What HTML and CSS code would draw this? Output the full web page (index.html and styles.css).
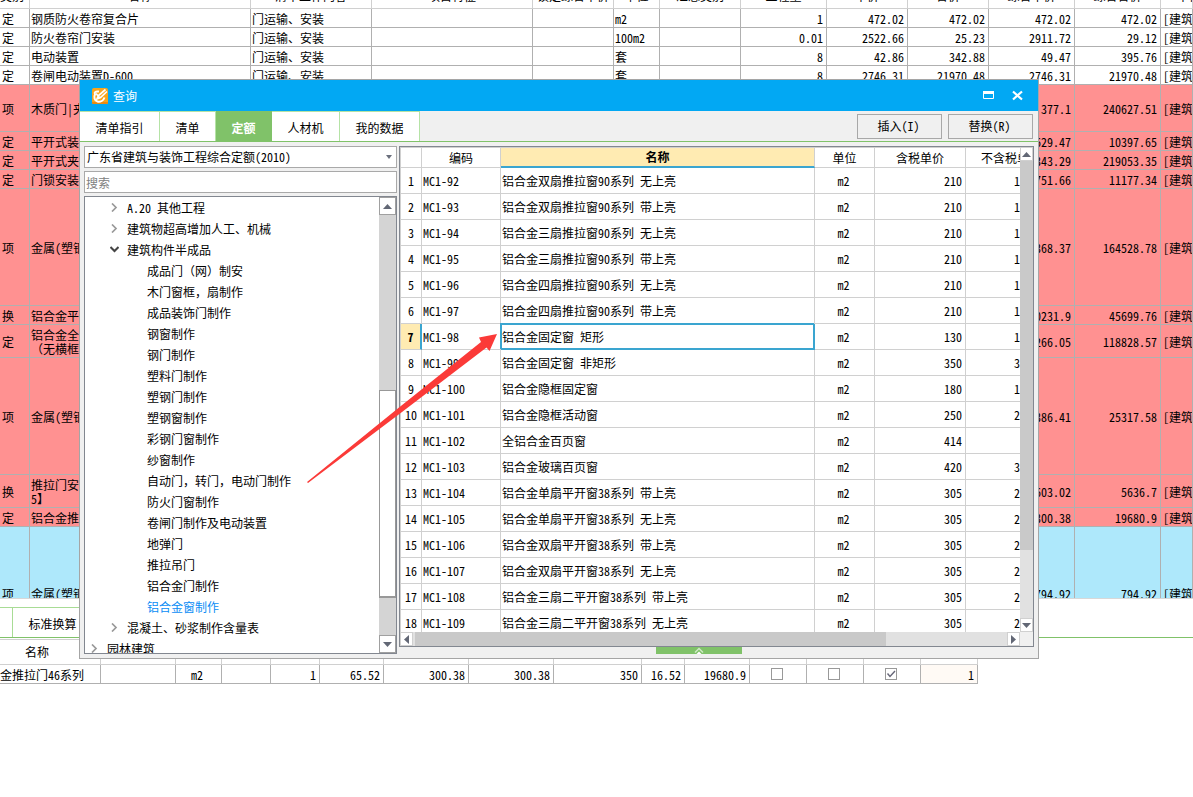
FILE: index.html
```html
<!DOCTYPE html>
<html lang="zh-CN">
<head>
<meta charset="utf-8">
<title>查询</title>
<link rel="stylesheet" href="styles.css">
</head>
<body>
<main class="app">
  <section class="budget">
    <table class="budget-table">
      <colgroup>
        <col class="w30"><col class="w221"><col class="w121"><col class="w161"><col class="w81"><col class="w46"><col class="w81"><col class="w86"><col class="w81"><col class="w81"><col class="w86"><col class="w86"><col>
      </colgroup>
      <thead>
        <tr class="r-head"><th class="kind">类别</th><th>名称</th><th>清单工作内容</th><th>项目特征</th><th>锁定综合单价</th><th>单位</th><th>汇总类别</th><th>工程量</th><th>单价</th><th>合价</th><th>综合单价</th><th>综合合价</th><th class="file">单价构成文件</th></tr>
      </thead>
      <tbody>
        <tr class="r19"><td>定</td><td>钢质防火卷帘复合片</td><td>门运输、安装</td><td></td><td></td><td>m2</td><td></td><td class="num">1</td><td class="num">472.02</td><td class="num">472.02</td><td class="num">472.02</td><td class="num">472.02</td><td>[建筑</td></tr>
        <tr class="r19"><td>定</td><td>防火卷帘门安装</td><td>门运输、安装</td><td></td><td></td><td>100m2</td><td></td><td class="num">0.01</td><td class="num">2522.66</td><td class="num">25.23</td><td class="num">2911.72</td><td class="num">29.12</td><td>[建筑</td></tr>
        <tr class="r19"><td>定</td><td>电动装置</td><td>门运输、安装</td><td></td><td></td><td>套</td><td></td><td class="num">8</td><td class="num">42.86</td><td class="num">342.88</td><td class="num">49.47</td><td class="num">395.76</td><td>[建筑</td></tr>
        <tr class="r19"><td>定</td><td>卷闸电动装置D-600</td><td>门运输、安装</td><td></td><td></td><td>套</td><td></td><td class="num">8</td><td class="num">2746.31</td><td class="num">21970.48</td><td class="num">2746.31</td><td class="num">21970.48</td><td>[建筑</td></tr>
        <tr class="r47 red"><td>项</td><td>木质门|夹</td><td></td><td></td><td></td><td></td><td></td><td></td><td></td><td></td><td class="num">377.1</td><td class="num">240627.51</td><td>[建筑</td></tr>
        <tr class="r19 red"><td>定</td><td>平开式装</td><td></td><td></td><td></td><td></td><td></td><td></td><td></td><td></td><td class="num">629.47</td><td class="num">10397.65</td><td>[建筑</td></tr>
        <tr class="r19 red"><td>定</td><td>平开式夹</td><td></td><td></td><td></td><td></td><td></td><td></td><td></td><td></td><td class="num">343.29</td><td class="num">219053.35</td><td>[建筑</td></tr>
        <tr class="r19 red"><td>定</td><td>门锁安装</td><td></td><td></td><td></td><td></td><td></td><td></td><td></td><td></td><td class="num">751.66</td><td class="num">11177.34</td><td>[建筑</td></tr>
        <tr class="r117 red"><td>项</td><td>金属(塑钢</td><td></td><td></td><td></td><td></td><td></td><td></td><td></td><td></td><td class="num">368.37</td><td class="num">164528.78</td><td>[建筑</td></tr>
        <tr class="r19 red"><td>换</td><td>铝合金平</td><td></td><td></td><td></td><td></td><td></td><td></td><td></td><td></td><td class="num">0231.9</td><td class="num">45699.76</td><td>[建筑</td></tr>
        <tr class="r33 red"><td>定</td><td>铝合金全<br>（无横框</td><td></td><td></td><td></td><td></td><td></td><td></td><td></td><td></td><td class="num">266.05</td><td class="num">118828.57</td><td>[建筑</td></tr>
        <tr class="r117 red"><td>项</td><td>金属(塑钢</td><td></td><td></td><td></td><td></td><td></td><td></td><td></td><td></td><td class="num">386.41</td><td class="num">25317.58</td><td>[建筑</td></tr>
        <tr class="r33 red"><td>换</td><td>推拉门安<br>5】</td><td></td><td></td><td></td><td></td><td></td><td></td><td></td><td></td><td class="num">603.02</td><td class="num">5636.7</td><td>[建筑</td></tr>
        <tr class="r19 red"><td>定</td><td>铝合金推</td><td></td><td></td><td></td><td></td><td></td><td></td><td></td><td></td><td class="num">300.38</td><td class="num">19680.9</td><td>[建筑</td></tr>
        <tr class="r132 blue"><td>项</td><td>金属(塑钢</td><td></td><td></td><td></td><td></td><td></td><td></td><td></td><td></td><td class="num">794.92</td><td class="num">794.92</td><td>[建筑</td></tr>
      </tbody>
    </table>
  </section>

  <section class="detail">
    <nav class="detail-tabs">
      <span class="stub"></span>
      <button type="button" class="detail-tab">标准换算</button>
    </nav>
    <table class="detail-table">
      <colgroup>
        <col class="w101"><col class="w75"><col class="w46"><col class="w49"><col class="w49"><col class="w64"><col class="w85"><col class="w85"><col class="w88"><col class="w43"><col class="w65"><col class="w57"><col class="w57"><col class="w57"><col class="w57">
      </colgroup>
      <thead>
        <tr class="r25"><th class="dname">名称</th><th></th><th></th><th></th><th></th><th></th><th></th><th></th><th></th><th></th><th></th><th></th><th></th><th></th><th></th></tr>
      </thead>
      <tbody>
        <tr class="r19"><td class="flush">金推拉门46系列</td><td></td><td class="mid">m2</td><td></td><td class="num">1</td><td class="num">65.52</td><td class="num">300.38</td><td class="num">300.38</td><td class="num">350</td><td class="num">16.52</td><td class="num">19680.9</td><td class="check"><input type="checkbox" aria-label="选项一"></td><td class="check"><input type="checkbox" aria-label="选项二"></td><td class="check"><input type="checkbox" aria-label="选项三" checked></td><td class="num cream">1</td></tr>
      </tbody>
    </table>
  </section>

  <section class="dialog" role="dialog" aria-labelledby="dialog-title">
    <header class="titlebar">
      <svg class="logo" width="16" height="16" viewBox="0 0 16 16" aria-hidden="true">
        <rect width="16" height="16" rx="2" fill="#f9a51d"/>
        <path d="M0 14h16v1q0 1-1 1H1q-1 0-1-1z" fill="#e98a12"/>
        <path d="M7 3.500C3.500 3 2 4.500 3 6.500C1.500 9 2.500 12.500 5.500 13.500C8.500 14.200 11.500 12.500 12.500 9.500" fill="none" stroke="#fff" stroke-width="2"/>
        <path d="M13.500 1.500L6.500 7.500L5 11L8.500 9.500L15 3.500M4 5.500L8 10" fill="none" stroke="#fff" stroke-width="1.700"/>
      </svg>
      <h1 id="dialog-title">查询</h1>
      <button type="button" class="win-btn" aria-label="最大化">
        <svg width="12" height="12" viewBox="0 0 12 12"><path d="M0.500 1.500h10v7h-10z" fill="none" stroke="#fff"/><path d="M0 1h11v3H0z" fill="#fff"/></svg>
      </button>
      <button type="button" class="win-btn" aria-label="关闭">
        <svg width="12" height="12" viewBox="0 0 12 12"><path d="M1 1.500l9 8M10 1.500l-9 8" fill="none" stroke="#fff" stroke-width="2.200"/></svg>
      </button>
    </header>

    <div class="toolbar">
      <nav class="tabs">
        <button type="button" class="tab t80">清单指引</button>
        <button type="button" class="tab t56">清单</button>
        <button type="button" class="tab t56 active">定额</button>
        <button type="button" class="tab t68">人材机</button>
        <button type="button" class="tab t80">我的数据</button>
      </nav>
      <div class="actions">
        <button type="button" class="action">插入(I)</button>
        <button type="button" class="action">替换(R)</button>
      </div>
    </div>

    <div class="panes">
      <div class="side">
        <div class="combo">
          <select aria-label="定额库"><option>广东省建筑与装饰工程综合定额(2010)</option></select>
          <svg class="caret" width="6" height="4" viewBox="0 0 6 4" aria-hidden="true"><path d="M0 0h6L3 4z" fill="#6a6f7c"/></svg>
        </div>
        <input class="search" type="text" placeholder="搜索" aria-label="搜索">
        <div class="tree-box">
          <ul class="tree">
            <li class="l1"><svg class="chev" viewBox="0 0 9 9"><path d="M2 0.500l4 4l-4 4"/></svg>A.20 其他工程</li>
            <li class="l1"><svg class="chev" viewBox="0 0 9 9"><path d="M2 0.500l4 4l-4 4"/></svg>建筑物超高增加人工、机械</li>
            <li class="l1"><svg class="chev open" viewBox="0 0 9 9"><path d="M0.500 2l4 4l4-4"/></svg>建筑构件半成品</li>
            <li class="l2">成品门（网）制安</li>
            <li class="l2">木门窗框，扇制作</li>
            <li class="l2">成品装饰门制作</li>
            <li class="l2">钢窗制作</li>
            <li class="l2">钢门制作</li>
            <li class="l2">塑料门制作</li>
            <li class="l2">塑钢门制作</li>
            <li class="l2">塑钢窗制作</li>
            <li class="l2">彩钢门窗制作</li>
            <li class="l2">纱窗制作</li>
            <li class="l2">自动门，转门，电动门制作</li>
            <li class="l2">防火门窗制作</li>
            <li class="l2">卷闸门制作及电动装置</li>
            <li class="l2">地弹门</li>
            <li class="l2">推拉吊门</li>
            <li class="l2">铝合金门制作</li>
            <li class="l2 current">铝合金窗制作</li>
            <li class="l1"><svg class="chev" viewBox="0 0 9 9"><path d="M2 0.500l4 4l-4 4"/></svg>混凝土、砂浆制作含量表</li>
            <li class="l0"><svg class="chev" viewBox="0 0 9 9"><path d="M2 0.500l4 4l-4 4"/></svg>园林建筑</li>
          </ul>
          <div class="tree-bar">
            <button type="button" class="tb-btn" aria-label="向上"><svg width="9" height="5" viewBox="0 0 9 5"><path d="M0 5h9L4.500 0z"/></svg></button>
            <span class="tree-gap"></span>
            <span class="tree-thumb"></span>
            <span class="tree-rest"></span>
            <button type="button" class="tb-btn" aria-label="向下"><svg width="9" height="5" viewBox="0 0 9 5"><path d="M0 0h9L4.500 5z"/></svg></button>
          </div>
        </div>
      </div>

      <div class="grid-side">
        <div class="grid-box">
          <div class="grid-view">
            <table class="grid">
              <colgroup><col class="w21"><col class="w79"><col><col class="w60"><col class="w91"><col class="w91"></colgroup>
              <thead>
                <tr class="r21"><th></th><th>编码</th><th class="picked">名称</th><th>单位</th><th>含税单价</th><th>不含税单价</th></tr>
              </thead>
              <tbody>
                <tr><th>1</th><td>MC1-92</td><td>铝合金双扇推拉窗90系列 无上亮</td><td class="mid">m2</td><td class="num">210</td><td class="tail">179.49</td></tr>
                <tr><th>2</th><td>MC1-93</td><td>铝合金双扇推拉窗90系列 带上亮</td><td class="mid">m2</td><td class="num">210</td><td class="tail">179.49</td></tr>
                <tr><th>3</th><td>MC1-94</td><td>铝合金三扇推拉窗90系列 无上亮</td><td class="mid">m2</td><td class="num">210</td><td class="tail">179.49</td></tr>
                <tr><th>4</th><td>MC1-95</td><td>铝合金三扇推拉窗90系列 带上亮</td><td class="mid">m2</td><td class="num">210</td><td class="tail">179.49</td></tr>
                <tr><th>5</th><td>MC1-96</td><td>铝合金四扇推拉窗90系列 无上亮</td><td class="mid">m2</td><td class="num">210</td><td class="tail">179.49</td></tr>
                <tr><th>6</th><td>MC1-97</td><td>铝合金四扇推拉窗90系列 带上亮</td><td class="mid">m2</td><td class="num">210</td><td class="tail">179.49</td></tr>
                <tr class="sel"><th>7</th><td>MC1-98</td><td class="cell-on">铝合金固定窗 矩形</td><td class="mid">m2</td><td class="num">130</td><td class="tail">111.11</td></tr>
                <tr><th>8</th><td>MC1-99</td><td>铝合金固定窗 非矩形</td><td class="mid">m2</td><td class="num">350</td><td class="tail">300</td></tr>
                <tr><th>9</th><td>MC1-100</td><td>铝合金隐框固定窗</td><td class="mid">m2</td><td class="num">180</td><td class="tail">153.85</td></tr>
                <tr><th>10</th><td>MC1-101</td><td>铝合金隐框活动窗</td><td class="mid">m2</td><td class="num">250</td><td class="tail">213.68</td></tr>
                <tr><th>11</th><td>MC1-102</td><td>全铝合金百页窗</td><td class="mid">m2</td><td class="num">414</td><td class="tail"></td></tr>
                <tr><th>12</th><td>MC1-103</td><td>铝合金玻璃百页窗</td><td class="mid">m2</td><td class="num">420</td><td class="tail">358.97</td></tr>
                <tr><th>13</th><td>MC1-104</td><td>铝合金单扇平开窗38系列 带上亮</td><td class="mid">m2</td><td class="num">305</td><td class="tail">260.68</td></tr>
                <tr><th>14</th><td>MC1-105</td><td>铝合金单扇平开窗38系列 无上亮</td><td class="mid">m2</td><td class="num">305</td><td class="tail">260.68</td></tr>
                <tr><th>15</th><td>MC1-106</td><td>铝合金双扇平开窗38系列 带上亮</td><td class="mid">m2</td><td class="num">305</td><td class="tail">260.68</td></tr>
                <tr><th>16</th><td>MC1-107</td><td>铝合金双扇平开窗38系列 无上亮</td><td class="mid">m2</td><td class="num">305</td><td class="tail">260.68</td></tr>
                <tr><th>17</th><td>MC1-108</td><td>铝合金三扇二平开窗38系列 带上亮</td><td class="mid">m2</td><td class="num">305</td><td class="tail">260.68</td></tr>
                <tr><th>18</th><td>MC1-109</td><td>铝合金三扇二平开窗38系列 无上亮</td><td class="mid">m2</td><td class="num">305</td><td class="tail">260.68</td></tr>
              </tbody>
            </table>
          </div>
          <div class="vbar">
            <button type="button" class="sb-btn" aria-label="向上"><svg width="9" height="5" viewBox="0 0 9 5"><path d="M0 5h9L4.500 0z"/></svg></button>
            <span class="vthumb"></span>
            <button type="button" class="sb-btn" aria-label="向下"><svg width="9" height="5" viewBox="0 0 9 5"><path d="M0 0h9L4.500 5z"/></svg></button>
          </div>
          <div class="hbar">
            <button type="button" class="sb-btn" aria-label="向左"><svg width="5" height="9" viewBox="0 0 5 9"><path d="M5 0v9L0 4.500z"/></svg></button>
            <span class="hthumb"></span>
            <button type="button" class="sb-btn" aria-label="向右"><svg width="5" height="9" viewBox="0 0 5 9"><path d="M0 0v9L5 4.500z"/></svg></button>
          </div>
          <span class="corner"></span>
        </div>
        <button type="button" class="handle" aria-label="展开"><svg width="10" height="7" viewBox="0 0 10 7"><path d="M1 5.500l4-4l4 4" fill="none" stroke="#cfeac6" stroke-width="1.500"/><path d="M2.500 7L5 4.500L7.500 7z" fill="#fff"/></svg></button>
      </div>
    </div>
  </section>

  <svg class="pointer" width="192" height="150" viewBox="0 0 192 150" aria-hidden="true"><path d="M0 148L92 73.500L174 8L172 3.500L190 0L182.500 17L179.500 13.500L95 78L1 149z" fill="#fb3a38"/></svg>
</main>
</body>
</html>
```
FILE: styles.css
```css
* { box-sizing: border-box; }

body {
  margin: 0;
  background: #fff;
  color: #000;
  font: 12px/14px "Noto Sans Mono CJK SC", "Noto Sans CJK SC", "Liberation Mono", monospace;
}

button, input, select { font: inherit; color: inherit; margin: 0; border-radius: 0; }
button { padding: 0; border: 0; background: none; }

.app { position: relative; min-height: 100vh; overflow: hidden; }

table { border-collapse: separate; border-spacing: 0; table-layout: fixed; }
th, td {
  padding: 2px 3px 0 1px;
  border: solid #b0b0b0;
  border-width: 0 1px 1px 0;
  overflow: hidden;
  white-space: nowrap;
  text-align: left;
  vertical-align: middle;
  font-weight: 400;
}
thead th { padding: 0; text-align: center; border-color: #d0d0d0; }
.num { text-align: right; }
.mid { text-align: center; padding-left: 0; }

.w21 { width: 21px; }
.w30 { width: 30px; }
.w43 { width: 43px; }
.w46 { width: 46px; }
.w49 { width: 49px; }
.w57 { width: 57px; }
.w60 { width: 60px; }
.w64 { width: 64px; }
.w65 { width: 65px; }
.w75 { width: 75px; }
.w79 { width: 79px; }
.w81 { width: 81px; }
.w85 { width: 85px; }
.w86 { width: 86px; }
.w88 { width: 88px; }
.w91 { width: 91px; }
.w101 { width: 101px; }
.w121 { width: 121px; }
.w161 { width: 161px; }
.w221 { width: 221px; }

.r-head { height: 25px; }
.r19 { height: 19px; }
.r21 { height: 21px; }
.r25 { height: 25px; }
.r33 { height: 33px; }
.r47 { height: 47px; }
.r117 { height: 117px; }
.r132 { height: 132px; }
.r33 td { line-height: 14px; }

/* budget sheet */
.budget { height: 599px; overflow: hidden; border-bottom: 1px solid #d8d8d8; }
.budget-table { width: 100%; margin-top: -16px; }
.budget-table td:first-child { padding-left: 2px; }
.budget-table td:last-child { padding-left: 2px; }
.budget-table .kind { text-align: left; padding-right: 8px; }
.budget-table .file { text-align: left; padding-left: 16px; }
.red td { background: #ff9191; }
.blue td { background: #aee8fb; }

/* detail panel */
.detail { padding-top: 8px; }
.detail-tabs { display: flex; height: 31px; border-bottom: 1px solid #80c269; }
.stub { width: 13px; border: solid #a8dc95; border-width: 1px 1px 0 0; }
.detail-tab { width: 80px; border: solid #a8dc95; border-width: 1px 1px 0 0; background: #fff; padding-top: 3px; }
.detail-table { width: 978px; margin-top: 1px; border-top: 1px solid #d0d0d0; }
.detail-table .dname { padding-right: 26px; }
.detail-table .flush { padding-left: 0; }
.detail-table .check { padding: 0 2px 0 0; }
.cream { background: #fffaf5; }

input[type="checkbox"] {
  appearance: none;
  display: block;
  width: 12px;
  height: 12px;
  margin: 0 auto;
  border: 1px solid #999;
  background: #fff;
}
input[type="checkbox"]:checked {
  background: #fff url("data:image/svg+xml,%3Csvg xmlns='http://www.w3.org/2000/svg' viewBox='0 0 10 10'%3E%3Cpath d='M1.500 4.500l2.500 3l5-5.500' fill='none' stroke='%23667' stroke-width='1.400'/%3E%3C/svg%3E") center / 10px 10px no-repeat;
}

/* dialog */
.dialog {
  position: absolute;
  top: 79px;
  left: 79px;
  right: 154px;
  border: 1px solid #a5a5a5;
  background: #f0f0f0;
}
.titlebar { display: flex; align-items: center; height: 31px; padding: 0 14px 0 12px; background: #02a8f3; color: #fff; }
.titlebar h1 { flex: 1; margin: 0 0 0 5px; font-size: 12px; font-weight: 400; }
.win-btn { width: 12px; height: 12px; margin-left: 17px; }
.win-btn svg { display: block; }

.toolbar { display: flex; justify-content: space-between; height: 31px; border-bottom: 1px solid #80c269; }
.tabs { display: flex; }
.tab { border: solid #b5e3a6; border-width: 1px 1px 0 0; background: #fff; padding-top: 2px; }
.tab.active { background: #80c269; border-color: #80c269; color: #fff; font-weight: 700; }
.t56 { width: 56px; }
.t68 { width: 68px; }
.t80 { width: 80px; }
.actions { display: flex; gap: 6px; padding: 3px 5px 2px 0; }
.action { width: 85px; padding: 0 2px 2px 0; border: 1px solid #a8a8a8; background: #f0f0f0; }

.panes { display: flex; gap: 2px; padding: 4px; }
.side { display: flex; flex-direction: column; width: 313px; gap: 3px; }
.combo { position: relative; height: 22px; }
.combo select { appearance: none; width: 100%; height: 100%; padding: 0 16px 0 2px; border: 1px solid #a9a9a9; background: #fff; }
.caret { position: absolute; right: 5px; top: 9px; }
.search { height: 22px; padding: 0 1px; border: 1px solid #a9a9a9; background: #fff; }
.search::placeholder { color: #808080; opacity: 1; }
.tree-box { display: flex; height: 458px; border: 1px solid #828790; background: #fff; overflow: hidden; }
.tree { flex: 1; margin: 0; padding: 0; list-style: none; }
.tree li { display: flex; align-items: center; height: 21px; white-space: nowrap; }
.chev { width: 9px; height: 9px; margin-right: 8px; fill: none; stroke: #999; stroke-width: 1.7; }
.chev.open { stroke: #444; stroke-width: 2; }
.l0 { padding-left: 5px; }
.l1 { padding-left: 25px; }
.l2 { padding-left: 62px; }
.current { color: #0a8df5; }
.tree-bar { display: flex; flex-direction: column; width: 17px; background: #d4d4d4; }
.tb-btn { height: 18px; border: 1px solid #a0a0a0; background: #fff; display: grid; place-items: center; }
.tb-btn svg, .sb-btn svg { fill: #626775; }
.tree-gap { flex: 176; }
.tree-thumb { flex: 207; border: 1px solid #989898; border-bottom-width: 2px; background: #fff; }
.tree-rest { flex: 37; }

.grid-side { flex: 1; min-width: 0; }
.grid-box {
  display: grid;
  grid-template-columns: minmax(0, 1fr) 13px;
  grid-template-rows: 485px 14px;
  border: 1px solid #828790;
  background: #fff;
}
.grid-view { overflow: hidden; border-left: 1px solid #d0d0d0; }
.grid { width: calc(100% + 37px); }
.grid th, .grid td { height: 26px; border-color: #d0d0d0; }
.grid td { padding: 0 3px 0 1px; }
.grid th { padding: 0; text-align: center; }
.grid thead th { height: 21px; border-top: 1px solid #d0d0d0; }
.grid .mid { padding: 0 2px 0 0; }
.grid .tail { padding: 0 0 0 48px; }
.grid thead .picked { background: #ffebb2; font-weight: 700; border-bottom: 2px solid #3aa5d0; }
.grid .sel th { background: #ffebb2; font-weight: 700; border-right: 2px solid #3aa5d0; }
.grid .sel .cell-on { border-color: #3aa5d0; box-shadow: inset 0 0 0 1px #3aa5d0, -1px -1px 0 0 #3aa5d0; }

.vbar { display: flex; flex-direction: column; background: #e1e1e1; }
.hbar { display: flex; background: #e1e1e1; }
.sb-btn { flex: none; width: 13px; height: 14px; border: 1px solid #d0d0d0; background: #fff; display: grid; place-items: center; }
.vthumb { flex: none; height: 389px; margin-bottom: auto; background: #c9c9c9; }
.hthumb { width: 76%; margin: 0 auto 0 2px; background: #c9c9c9; }
.corner { background: #f0f0f0; }
.handle { display: block; width: 86px; height: 7px; margin: 0 auto 0 257px; background: #80c269; }
.handle svg { display: block; margin: 0 auto; }

.pointer { position: absolute; left: 307px; top: 334px; }
```
